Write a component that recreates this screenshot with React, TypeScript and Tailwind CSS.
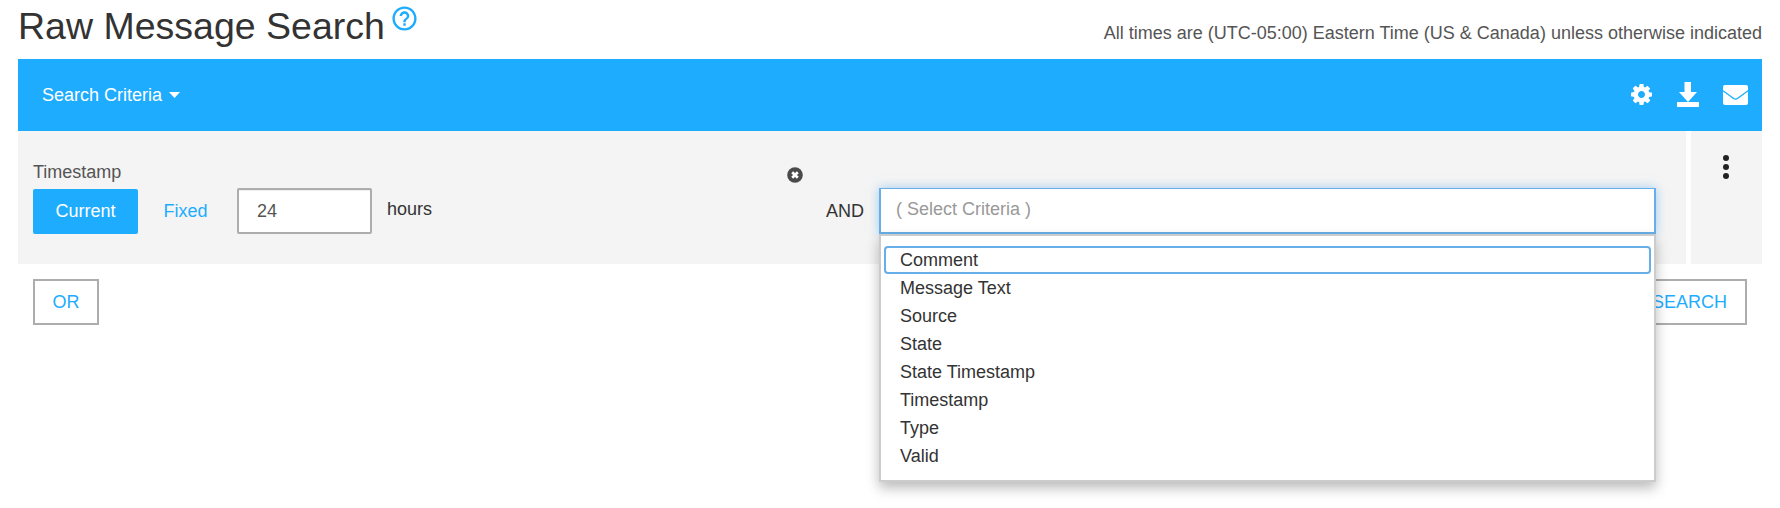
import React from "react";
import { MdHelpOutline } from "react-icons/md";

const criteria = [
  "Comment",
  "Message Text",
  "Source",
  "State",
  "State Timestamp",
  "Timestamp",
  "Type",
  "Valid",
];

function CogIcon() {
  return (
    <svg className="h-[21px] w-[21px]" viewBox="0 0 1536 1536" fill="currentColor">
      <path d="M1024 768q0-106-75-181t-181-75-181 75-75 181 75 181 181 75 181-75 75-181zm512-109v222q0 12-8 23t-20 13l-185 28q-19 54-39 91 35 50 107 138 10 12 10 25t-9 23q-27 37-99 108t-94 71q-12 0-26-9l-138-108q-44 23-91 38-16 136-29 186-7 28-36 28H657q-14 0-24.500-8.500T621 1506l-28-184q-49-16-90-37l-141 107q-10 9-25 9-14 0-25-11-126-114-165-168-7-10-7-23 0-12 8-23 15-21 51-66.500t54-70.500q-27-50-41-99L29 913q-13-2-21-12.500T0 877V655q0-12 8-23t19-13l186-28q14-46 39-92-40-57-107-138-10-12-10-24 0-10 9-23 26-36 98.500-107.500T337 135q13 0 26 10l138 107q44-23 91-38 16-136 29-186 7-28 36-28h222q14 0 24.500 8.500T915 30l28 184q49 16 90 37l142-107q9-9 24-9 13 0 25 10 129 119 165 170 7 8 7 22 0 12-8 23-15 21-51 66.500t-54 70.500q26 50 41 98l183 28q13 2 21 12.500t8 23.500z" />
    </svg>
  );
}

function DownloadIcon() {
  return (
    <svg className="h-[25px] w-[22px]" viewBox="0 0 22 25" fill="currentColor">
      <path d="M7.500 0h6.500v10h6l-9 10-9-10h5.500zM0 20h22v5H0z" />
    </svg>
  );
}

function EnvelopeIcon() {
  return (
    <svg className="h-5 w-[25px]" viewBox="0 0 25 20" fill="currentColor">
      <path d="M2 0h21a2 2 0 0 1 2 2v3L14.300 12.800a3 3 0 0 1-3.600 0L0 5V2a2 2 0 0 1 2-2z" />
      <path d="M0 6.500l10.200 7.400a4 4 0 0 0 4.600 0L25 6.500V18a2 2 0 0 1-2 2H2a2 2 0 0 1-2-2z" />
    </svg>
  );
}

function RemoveIcon() {
  return (
    <svg className="h-4 w-4" viewBox="0 0 16 16">
      <circle cx="8" cy="8" r="7.800" fill="#4a4a4a" />
      <path d="M5.200 5.200l5.600 5.600M10.800 5.200l-5.600 5.600" stroke="#fff" strokeWidth="2.700" />
    </svg>
  );
}

function CriteriaSelect() {
  return (
    <div className="relative w-[777px]">
      <div className="flex h-[46px] items-center border-2 border-t border-[#66afe9] bg-white pb-[3px] pl-[15px] text-[#999] shadow-[0_0_10px_rgba(102,175,233,0.6)]">
        ( Select Criteria )
      </div>
      <ul className="absolute top-[46px] left-0 z-10 h-[248px] w-[777px] border-2 border-[#ccc] bg-white px-[3px] pt-[10px] text-[#333] shadow-[0_6px_12px_rgba(0,0,0,0.27)]">
        {criteria.map((name, i) => (
          <li
            key={name}
            className={
              i === 0
                ? "flex h-7 items-center rounded border-2 border-[#66afe9] pb-px pl-[14px]"
                : "flex h-7 items-center pb-px pl-4"
            }
          >
            {name}
          </li>
        ))}
      </ul>
    </div>
  );
}

export default function App() {
  return (
    <div className="h-[508px] overflow-hidden bg-white px-[18px] font-['Liberation_Sans',Arial,sans-serif] text-[18px] leading-[26px] text-[#333]">
      <header className="flex h-[59px] items-start justify-between">
        <div className="flex items-start">
          <h1 className="pt-[4px] text-[37.5px] leading-[44px]">Raw Message Search</h1>
          <MdHelpOutline className="mt-[3.5px] ml-[5px] h-[29px] w-[29px] text-[#1eacff]" />
        </div>
        <p className="pt-5 text-[#555]">
          All times are (UTC-05:00) Eastern Time (US &amp; Canada) unless otherwise indicated
        </p>
      </header>

      <nav className="flex h-[72px] items-center justify-between bg-[#1eacff] pr-[14px] pl-6 text-white">
        <button className="flex items-center gap-[7px]">
          Search Criteria
          <svg className="h-[6px] w-[11px]" viewBox="0 0 11 6" fill="currentColor">
            <path d="M0 0h11L5.500 6z" />
          </svg>
        </button>
        <div className="flex items-center pb-px">
          <CogIcon />
          <span className="ml-[25px]"><DownloadIcon /></span>
          <span className="ml-6"><EnvelopeIcon /></span>
        </div>
      </nav>

      <section className="flex h-[133px] gap-[5px]">
        <div className="flex flex-1 bg-[#f4f4f4] pl-[15px]">
          <div className="w-[754px] pt-[29px]">
            <p className="leading-[25px] text-[#555]">Timestamp</p>
            <div className="mt-[3px] flex h-[46px] items-center">
              <button className="mt-px h-[45px] w-[105px] rounded-[2px] bg-[#1eacff] pb-px text-white">
                Current
              </button>
              <button className="ml-6 w-[47px] text-[#1eacff]">Fixed</button>
              <div className="ml-7 flex h-[46px] w-[135px] items-center rounded-[2px] border-2 border-[#adadad] bg-white pl-[18px] text-[#555] shadow-[inset_0_1px_1px_rgba(0,0,0,0.075)]">
                24
              </div>
              <span className="ml-[15px] pb-1">hours</span>
            </div>
          </div>
          <div className="w-[39px] pt-[36px]">
            <RemoveIcon />
          </div>
          <div className="mt-[57px] flex h-[46px] flex-1 items-center self-start">
            <span className="w-[53px]">AND</span>
            <CriteriaSelect />
          </div>
        </div>
        <div className="w-[71px] bg-[#f4f4f4] pt-6 pl-8">
          <svg className="h-6 w-[6px]" viewBox="0 0 6 24" fill="#222">
            <circle cx="3" cy="3" r="3" />
            <circle cx="3" cy="12" r="3" />
            <circle cx="3" cy="21" r="3" />
          </svg>
        </div>
      </section>

      <footer className="flex justify-between px-[15px] pt-[15px] text-[#1eacff]">
        <button className="h-[46px] w-[66px] border-2 border-[#adadad] pb-px">OR</button>
        <button className="h-[46px] border-2 border-[#adadad] px-[18px] pb-px">SEARCH</button>
      </footer>
    </div>
  );
}
